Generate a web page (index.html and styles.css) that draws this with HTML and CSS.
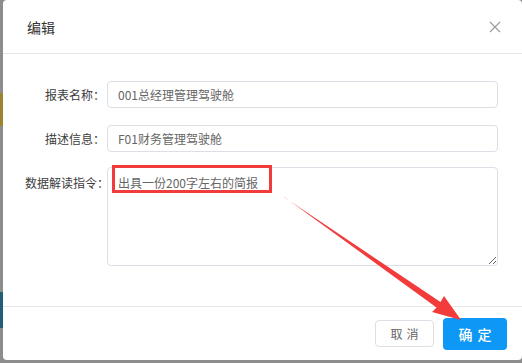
FILE: index.html
```html
<!DOCTYPE html>
<html lang="zh-CN">
  <head>
    <meta charset="UTF-8" />
    <meta name="viewport" content="width=device-width, initial-scale=1.0" />
    <title>编辑</title>
    <link rel="stylesheet" href="styles.css">
  </head>
  <body>
    <div class="page">
      <div class="side">
        <div class="side-gap g1"></div>
        <div class="side-gold"></div>
        <div class="side-gap g2"></div>
        <div class="side-teal"></div>
      </div>

      <div class="dialog">
        <div class="dialog-header">
          <span class="dialog-title">编辑</span>
          <svg class="close" width="12" height="12" viewBox="0 0 12 12">
            <path d="M1 1 L11 11 M11 1 L1 11" stroke="#9a9a9a" stroke-width="1.1" fill="none" />
          </svg>
        </div>

        <div class="dialog-body">
          <div class="form-row">
            <label class="form-label">报表名称：</label>
            <input class="form-input" type="text" value="001总经理管理驾驶舱" />
          </div>
          <div class="form-row">
            <label class="form-label">描述信息：</label>
            <input class="form-input" type="text" value="F01财务管理驾驶舱" />
          </div>
          <div class="form-row top">
            <label class="form-label label-top">数据解读指令：</label>
            <textarea class="form-textarea">出具一份200字左右的简报</textarea>
          </div>
        </div>

        <div class="dialog-footer">
          <button class="btn btn-cancel">取消</button>
          <button class="btn btn-ok">确定</button>
        </div>
      </div>

      <!-- annotation on top of the screenshot -->
      <div class="mark-box"></div>
      <svg class="mark-arrow" width="522" height="363" viewBox="0 0 522 363">
        <polygon fill="#f23b3b"
          points="283.6,196.4 284.6,197.6 440.5,302 444,296 461,320 432,312 436.5,307.5" />
      </svg>
    </div>
  </body>
</html>
```

FILE: styles.css
```css
* {
  margin: 0;
  padding: 0;
  box-sizing: border-box;
}

body {
  font-family: "Noto Sans CJK SC", "Noto Sans", sans-serif;
  background-color: #8d8d8d;
  overflow: hidden;
}

.page {
  position: relative;
  display: flex;
  width: 522px;
  height: 363px;
  background-color: #8d8d8d;
}

.side {
  width: 3px;
  display: flex;
  flex-direction: column;
}

.side-gap.g1 {
  height: 93px;
}

.side-gold {
  height: 33px;
  background-color: #9d8530;
}

.side-gap.g2 {
  height: 166px;
}

.side-teal {
  height: 36px;
  background-color: #225f74;
}

.dialog {
  flex: 1;
  height: 360px;
  background-color: #ffffff;
  border-radius: 4px;
  display: flex;
  flex-direction: column;
}

.dialog-header {
  height: 54px;
  padding: 0 21px 0 24px;
  display: flex;
  align-items: center;
  justify-content: space-between;
  border-bottom: 1px solid #e6e6e6;
}

.dialog-title {
  font-size: 14px;
  color: #333333;
}

.close {
  display: block;
}

.dialog-body {
  padding: 27px 24px 40px 22px;
  display: flex;
  flex-direction: column;
  gap: 17px;
}

.form-row {
  display: flex;
  align-items: center;
}

.form-row.top {
  align-items: flex-start;
  margin-top: -2px;
}

.form-label {
  width: 80px;
  flex-shrink: 0;
  margin-right: 2px;
  font-size: 12px;
  color: #3c3c3c;
  text-align: right;
  white-space: nowrap;
}

.label-top {
  padding-top: 6px;
  line-height: 20px;
}

.form-input {
  flex: 1;
  height: 27px;
  padding: 0 10px;
  border: 1px solid #dcdfe6;
  border-radius: 4px;
  font-family: inherit;
  font-size: 12px;
  color: #666666;
  outline: none;
}

.form-textarea {
  flex: 1;
  height: 99px;
  padding: 5px 10px;
  border: 1px solid #dcdfe6;
  border-radius: 4px;
  font-family: inherit;
  font-size: 12px;
  line-height: 20px;
  color: #666666;
  outline: none;
}

.dialog-footer {
  flex: 1;
  border-top: 1px solid #e6e6e6;
  display: flex;
  align-items: center;
  justify-content: flex-end;
  gap: 9px;
  padding-right: 15px;
}

.btn {
  font-family: inherit;
  border-radius: 4px;
  cursor: pointer;
}

.btn-cancel {
  width: 59px;
  height: 27px;
  background-color: #ffffff;
  border: 1px solid #dcdfe6;
  color: #666666;
  font-size: 12px;
  letter-spacing: 4px;
  text-indent: 4px;
}

.btn-ok {
  width: 64px;
  height: 32px;
  background-color: #0d98f6;
  border: none;
  color: #ffffff;
  font-size: 14px;
  font-weight: 500;
  letter-spacing: 5px;
  text-indent: 5px;
}

.mark-box {
  position: absolute;
  left: 112px;
  top: 165px;
  width: 160px;
  height: 28px;
  border: 3px solid #f23b3b;
}

.mark-arrow {
  position: absolute;
  left: 0;
  top: 0;
  pointer-events: none;
}
```
